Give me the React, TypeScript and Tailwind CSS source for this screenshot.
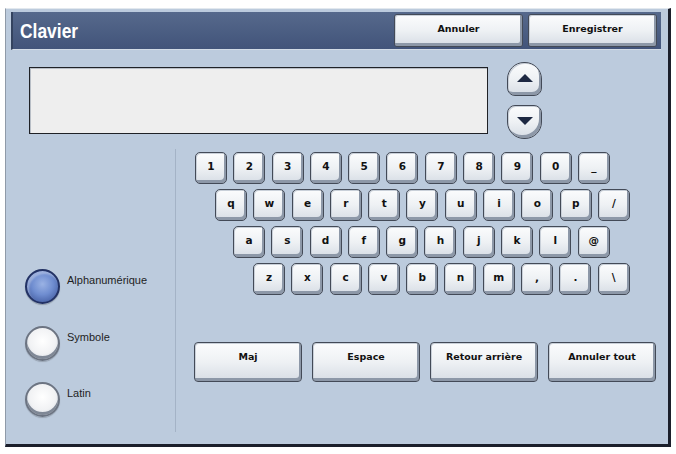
import * as React from "react"

const rows: { keys: string[]; indent: string }[] = [
  { keys: ["1", "2", "3", "4", "5", "6", "7", "8", "9", "0", "_"], indent: "ml-0" },
  { keys: ["q", "w", "e", "r", "t", "y", "u", "i", "o", "p", "/"], indent: "ml-[20px]" },
  { keys: ["a", "s", "d", "f", "g", "h", "j", "k", "l", "@"], indent: "ml-[38px]" },
  { keys: ["z", "x", "c", "v", "b", "n", "m", ",", ".", "\\"], indent: "ml-[58px]" },
]

const actions = ["Maj", "Espace", "Retour arrière", "Annuler tout"]

const modes = [
  { label: "Alphanumérique", selected: true },
  { label: "Symbole", selected: false },
  { label: "Latin", selected: false },
]

const btnFace =
  "border border-[#434a57] bg-linear-to-b from-[#fbfcfd] via-[#eef1f4] to-[#d7dde5] shadow-[inset_-2px_-3px_0_#8d98a8,inset_1px_1px_0_#c9d0d9] text-[#111] font-bold"

function Key({ label }: { label: string }) {
  return (
    <button
      className={`flex h-[32px] w-[32px] items-center justify-center rounded-[5px] pb-[2px] text-[10.5px] ${btnFace}`}
      style={{ fontFamily: '"DejaVu Sans", sans-serif' }}
    >
      {label}
    </button>
  )
}

function Radio({ label, selected }: { label: string; selected: boolean }) {
  return (
    <div className="flex h-[35px] items-start">
      {selected ? (
        <div className="h-[35px] w-[35px] shrink-0 rounded-full border-2 border-[#233264] bg-[radial-gradient(circle_at_50%_42%,#9ab2e4_0%,#6f8dd0_45%,#4a64a8_80%,#2f4380_100%)] shadow-[inset_2px_3px_2px_rgba(255,255,255,0.35),0_1px_1px_rgba(0,0,0,0.25)]" />
      ) : (
        <div className="h-[35px] w-[35px] shrink-0 rounded-full border-2 border-[#6c7482] bg-[radial-gradient(circle_at_50%_42%,#ffffff_0%,#f1f2f4_55%,#d3d8df_80%,#9aa2ae_100%)] shadow-[inset_0_-3px_0_#7f8896,0_1px_1px_rgba(0,0,0,0.2)]" />
      )}
      <span className="ml-[7px] mt-[5px] text-[11px] leading-[13px] text-[#1e1e1e]" style={{ fontFamily: '"Liberation Sans", Arial, sans-serif' }}>
        {label}
      </span>
    </div>
  )
}

export default function App() {
  return (
    <div className="h-[454px] w-[676px] bg-white pl-[5px] pt-[8px]">
      <div className="flex h-[439px] w-[666px] flex-col border-b-[3px] border-l border-r-[3px] border-t border-b-[#1b1f2b] border-l-[#8f9aa8] border-r-[#1b1f2b] border-t-[#e2e8ee] bg-[#bccbdd]">
        {/* Title bar */}
        <div className="ml-[5px] mt-[3px] flex h-[38px] w-[650px] items-center border-b border-b-[#d2dbe6] border-l-2 border-l-[#34435f] bg-linear-to-b from-[#56698c] to-[#42547a] pl-[7px] pr-[4px]">
          <span
            className="inline-block w-[60px] origin-left scale-x-[0.83] text-[21px] font-bold leading-none text-white"
            style={{ fontFamily: '"Liberation Sans", sans-serif' }}
          >
            Clavier
          </span>
          <div className="ml-auto flex gap-[5px]">
            {["Annuler", "Enregistrer"].map((t) => (
              <button
                key={t}
                className={`h-[33px] w-[129px] rounded-[3px] pb-[2px] text-[9.5px] ${btnFace}`}
                style={{ fontFamily: '"DejaVu Sans", sans-serif' }}
              >
                {t}
              </button>
            ))}
          </div>
        </div>

        {/* Input + arrows */}
        <div className="ml-[23px] mt-[17px] flex h-[67px] items-start">
          <div className="h-[67px] w-[459px] border border-[#1f2126] bg-[#eeeeee] shadow-[inset_1px_1px_0_#b8bec6]" />
          <div className="-mt-[5px] ml-[19px] flex flex-col">
            <button className={`flex h-[34px] w-[35px] items-center justify-center rounded-b-[8px] rounded-t-[17px] pb-[3px] ${btnFace}`}>
              <span className="h-0 w-0 border-b-[8px] border-l-[8px] border-r-[8px] border-b-[#1d2842] border-l-transparent border-r-transparent" />
            </button>
            <button className={`mt-[9px] flex h-[34px] w-[35px] items-center justify-center rounded-b-[17px] rounded-t-[8px] pb-[3px] ${btnFace}`}>
              <span className="h-0 w-0 border-l-[8px] border-r-[8px] border-t-[8px] border-l-transparent border-r-transparent border-t-[#1d2842]" />
            </button>
          </div>
        </div>

        {/* Keyboard area */}
        <div className="mt-[15px] flex">
          <div className="flex h-[283px] w-[170px] flex-col border-r border-r-[#a4b3c6] pl-[19px] pt-[120px]">
            {modes.map((m, i) => (
              <div key={m.label} className={i === 0 ? "" : i === 1 ? "mt-[22px]" : "mt-[21px]"}>
                <Radio label={m.label} selected={m.selected} />
              </div>
            ))}
          </div>

          <div className="flex flex-col pl-[19px] pt-[3px]">
            <div className="flex flex-col gap-[5px]">
              {rows.map((r, i) => (
                <div key={i} className={`flex gap-[6.3px] ${r.indent}`}>
                  {r.keys.map((k) => (
                    <Key key={k} label={k} />
                  ))}
                </div>
              ))}
            </div>
            <div className="-ml-[1px] mt-[47px] flex gap-[10px]">
              {actions.map((a) => (
                <button
                  key={a}
                  className={`flex h-[40px] w-[108px] justify-center rounded-[4px] pt-[7px] text-[9.5px] ${btnFace}`}
                  style={{ fontFamily: '"DejaVu Sans", sans-serif' }}
                >
                  {a}
                </button>
              ))}
            </div>
          </div>
        </div>
      </div>
    </div>
  )
}
